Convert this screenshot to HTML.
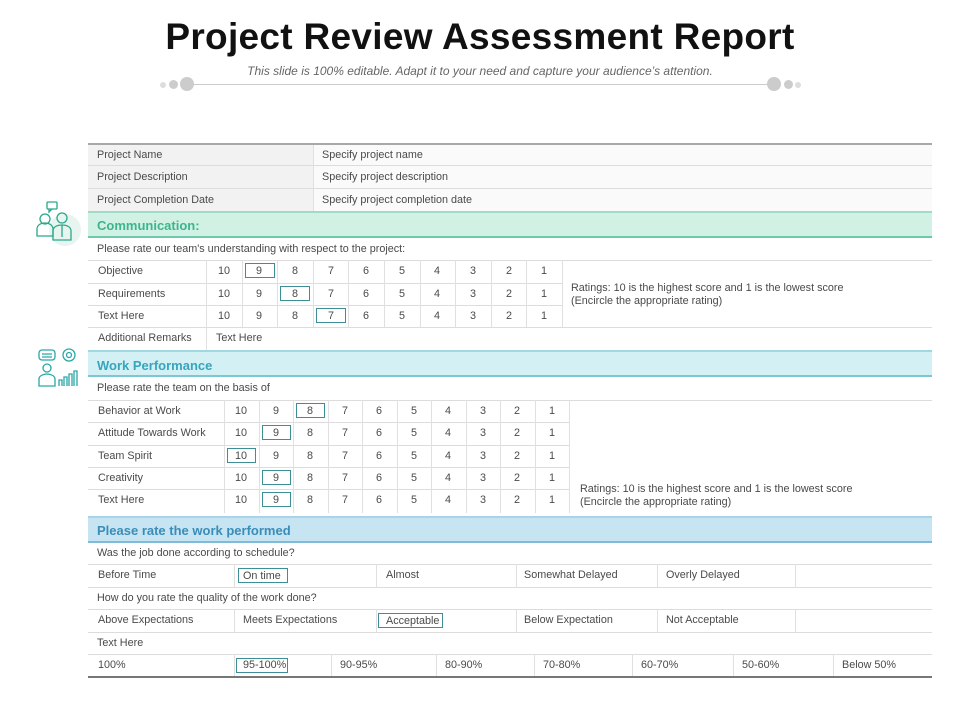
<!DOCTYPE html>
<html><head><meta charset="utf-8"><style>
*{margin:0;padding:0;box-sizing:border-box}
body{width:960px;height:720px;background:#fff;font-family:"Liberation Sans",Arial,sans-serif;position:relative;overflow:hidden;color:#444}
.a{position:absolute}
.t{font-size:10.8px;color:#4a4a4a;white-space:nowrap;line-height:1}
.hl{position:absolute;height:1px;background:#dcdcdc}
.vl{position:absolute;width:1px;background:#e0e0e0}
.box{position:absolute;border:1px solid #3d8f95;height:15px}
</style></head><body>
<div class="a" style="left:0;width:960px;top:16px;text-align:center;font-size:37px;font-weight:bold;color:#111;letter-spacing:0.3px">Project Review Assessment Report</div>
<div class="a" style="left:0;width:960px;top:64px;text-align:center;font-size:12px;font-style:italic;color:#666">This slide is 100% editable. Adapt it to your need and capture your audience’s attention.</div>
<div class="a" style="left:190px;top:84px;width:578px;height:1px;background:#ccc"></div>
<div class="a" style="left:160px;top:82px;width:6px;height:6px;border-radius:50%;background:#ddd"></div>
<div class="a" style="left:169px;top:80px;width:9px;height:9px;border-radius:50%;background:#ccc"></div>
<div class="a" style="left:180px;top:77px;width:14px;height:14px;border-radius:50%;background:#ccc"></div>
<div class="a" style="left:767px;top:77px;width:14px;height:14px;border-radius:50%;background:#ccc"></div>
<div class="a" style="left:784px;top:80px;width:9px;height:9px;border-radius:50%;background:#ccc"></div>
<div class="a" style="left:795px;top:82px;width:6px;height:6px;border-radius:50%;background:#ddd"></div>

<svg class="a" style="left:33px;top:200px" width="50" height="48" viewBox="0 0 50 48" fill="none" stroke="#2aa88a" stroke-width="1.3">
<circle cx="32" cy="30" r="16" fill="#e8f4f0" stroke="none"/>
<rect x="14" y="2" width="10" height="7" rx="1"/><path d="M16 9l0 3 3-3"/>
<circle cx="12" cy="19" r="5"/><path d="M4 36v-7c0-4 4-6 8-6s8 2 8 6v7z"/>
<circle cx="29" cy="18" r="5"/><path d="M20 40v-9c0-4 4-6 9-6s9 2 9 6v9z"/><path d="M29 25v12"/>
</svg>
<svg class="a" style="left:35px;top:346px" width="46" height="44" viewBox="0 0 46 44" fill="none" stroke="#2aa8a8" stroke-width="1.3">
<rect x="4" y="4" width="16" height="10" rx="3"/><path d="M7 8h10M7 11h10"/>
<circle cx="34" cy="9" r="6"/><circle cx="34" cy="9" r="2.5"/>
<circle cx="12" cy="22" r="4"/><path d="M4 40v-7c0-3 4-5 8-5s8 2 8 5v7z"/>
<path d="M24 40v-6h3v6M29 40v-9h3v9M34 40v-12h3v12M39 40v-15h3v15"/>
</svg>

<div class="a" style="left:88px;top:143px;width:844px;height:2px;background:#a8a8a8"></div>
<div class="a" style="left:88px;top:145px;width:225px;height:66px;background:#f2f2f2"></div>
<div class="a" style="left:313px;top:145px;width:619px;height:66px;background:#fafafa"></div>
<div class="hl" style="left:88px;top:165px;width:844px"></div>
<div class="hl" style="left:88px;top:188px;width:844px"></div>
<div class="vl" style="left:313px;top:145px;height:66px"></div>
<div class="a t" style="left:97px;top:150px">Project Name</div>
<div class="a t" style="left:97px;top:172px">Project Description</div>
<div class="a t" style="left:97px;top:195px">Project Completion  Date</div>
<div class="a t" style="left:322px;top:150px">Specify project name</div>
<div class="a t" style="left:322px;top:172px">Specify project description</div>
<div class="a t" style="left:322px;top:195px">Specify project completion date</div>

<div class="a" style="left:88px;top:211px;width:844px;height:27px;background:#d2f1e5;border-top:2px solid #9fdcc6;border-bottom:2px solid #6ccaa8"></div>
<div class="a" style="left:97px;top:218px;font-size:13px;font-weight:bold;color:#3db58c">Communication:</div>
<div class="a t" style="left:97px;top:244px">Please rate our team's understanding with respect to the project:</div>
<div class="hl" style="left:88px;top:260px;width:844px"></div>
<div class="hl" style="left:88px;top:283px;width:474px"></div>
<div class="hl" style="left:88px;top:305px;width:474px"></div>
<div class="hl" style="left:88px;top:327px;width:844px"></div>
<div class="vl" style="left:206px;top:260px;height:90px"></div>
<div id="c1"></div>
<div class="a t" style="left:98px;top:266px">Objective</div>
<div class="a t" style="left:98px;top:289px">Requirements</div>
<div class="a t" style="left:98px;top:311px">Text Here</div>
<div class="a t" style="left:98px;top:333px">Additional Remarks</div>
<div class="a t" style="left:216px;top:333px">Text Here</div>
<div class="a t" style="left:571px;top:282px;line-height:13px">Ratings: 10 is the highest score and 1 is the lowest score<br>(Encircle the appropriate rating)</div>

<div class="a" style="left:88px;top:350px;width:844px;height:27px;background:#d3f0f4;border-top:2px solid #9fd8e2;border-bottom:2px solid #7cc7d6"></div>
<div class="a" style="left:97px;top:358px;font-size:13px;font-weight:bold;color:#36a5bd">Work Performance</div>
<div class="a t" style="left:97px;top:383px">Please rate the team on the basis of</div>
<div class="hl" style="left:88px;top:400px;width:844px"></div>
<div class="hl" style="left:88px;top:422px;width:482px"></div>
<div class="hl" style="left:88px;top:445px;width:482px"></div>
<div class="hl" style="left:88px;top:467px;width:482px"></div>
<div class="hl" style="left:88px;top:489px;width:482px"></div>
<div class="vl" style="left:224px;top:400px;height:113px"></div>
<div id="c2"></div>
<div class="a t" style="left:98px;top:406px">Behavior at Work</div>
<div class="a t" style="left:98px;top:428px">Attitude Towards Work</div>
<div class="a t" style="left:98px;top:451px">Team Spirit</div>
<div class="a t" style="left:98px;top:473px">Creativity</div>
<div class="a t" style="left:98px;top:495px">Text Here</div>
<div class="a t" style="left:580px;top:483px;line-height:13px">Ratings: 10 is the highest score and 1 is the lowest score<br>(Encircle the appropriate rating)</div>

<div class="a" style="left:88px;top:516px;width:844px;height:27px;background:#c6e4f2;border-top:2px solid #a8d4ea;border-bottom:2px solid #7fbad8"></div>
<div class="a" style="left:97px;top:523px;font-size:13px;font-weight:bold;color:#3a8db8">Please rate the work performed</div>
<div class="a t" style="left:97px;top:548px">Was the job  done according to schedule?</div>
<div class="hl" style="left:88px;top:564px;width:844px"></div>
<div class="hl" style="left:88px;top:587px;width:844px"></div>
<div class="a t" style="left:97px;top:593px">How do you rate the quality of the work done?</div>
<div class="hl" style="left:88px;top:609px;width:844px"></div>
<div class="hl" style="left:88px;top:632px;width:844px"></div>
<div class="a t" style="left:97px;top:638px">Text Here</div>
<div class="hl" style="left:88px;top:654px;width:844px"></div>
<div class="a" style="left:88px;top:676px;width:844px;height:2px;background:#777"></div>
<div class="vl" style="left:234px;top:564px;height:23px"></div><div class="vl" style="left:376px;top:564px;height:23px"></div><div class="vl" style="left:516px;top:564px;height:23px"></div><div class="vl" style="left:657px;top:564px;height:23px"></div><div class="vl" style="left:795px;top:564px;height:23px"></div>
<div class="vl" style="left:234px;top:609px;height:23px"></div><div class="vl" style="left:376px;top:609px;height:23px"></div><div class="vl" style="left:516px;top:609px;height:23px"></div><div class="vl" style="left:657px;top:609px;height:23px"></div><div class="vl" style="left:795px;top:609px;height:23px"></div>
<div class="a t" style="left:98px;top:570px">Before Time</div>
<div class="box" style="left:238px;top:568px;width:50px"></div><div class="a t" style="left:243px;top:571px">On time</div>
<div class="a t" style="left:386px;top:570px">Almost</div>
<div class="a t" style="left:524px;top:570px">Somewhat Delayed</div>
<div class="a t" style="left:666px;top:570px">Overly Delayed</div>
<div class="a t" style="left:98px;top:615px">Above Expectations</div>
<div class="a t" style="left:243px;top:615px">Meets Expectations</div>
<div class="box" style="left:378px;top:613px;width:65px"></div><div class="a t" style="left:386px;top:616px">Acceptable</div>
<div class="a t" style="left:524px;top:615px">Below Expectation</div>
<div class="a t" style="left:666px;top:615px">Not Acceptable</div>
<div id="c3"></div>
<script>
function cells(id,x0,w,tops,h,boxes,vtop,vh){
 var s='';
 for(var i=0;i<=10;i++){s+='<div class="vl" style="left:'+Math.round(x0+i*w)+'px;top:'+vtop+'px;height:'+vh+'px"></div>';}
 tops.forEach(function(t,r){
  for(var i=0;i<10;i++){var cx=x0+i*w+w/2;
   if(boxes[r]==i)s+='<div class="box" style="left:'+Math.round(x0+i*w+3)+'px;top:'+(t+3)+'px;width:'+Math.round(w-6)+'px"></div>';
   s+='<div class="a t" style="left:'+Math.round(cx-12)+'px;width:24px;text-align:center;top:'+(t+6)+'px">'+(10-i)+'</div>';}
 });
 document.getElementById(id).innerHTML=s;
}
cells('c1',206,35.6,[260,283,305],22,[1,2,3],260,67);
cells('c2',224,34.5,[400,422,445,467,489],22,[2,1,0,1,1],400,113);
var xs=[88,234,331,436,534,632,733,833,932],lb=['100%','95-100%','90-95%','80-90%','70-80%','60-70%','50-60%','Below 50%'],s='';
for(var i=0;i<8;i++){s+='<div class="a t" style="left:'+(xs[i]+(i?9:10))+'px;top:660px">'+lb[i]+'</div>';if(i)s+='<div class="vl" style="left:'+xs[i]+'px;top:654px;height:22px"></div>';}
s+='<div class="box" style="left:236px;top:658px;width:52px"></div>';
document.getElementById('c3').innerHTML=s;
</script>
</body></html>
